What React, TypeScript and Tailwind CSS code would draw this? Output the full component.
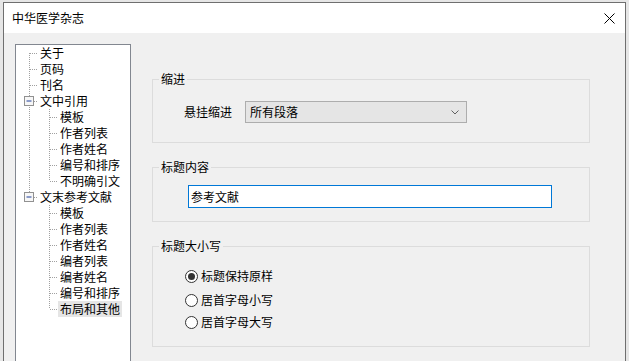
import React from 'react';

type Node = { label: string; children?: string[] };

const tree: Node[] = [
  { label: '关于' },
  { label: '页码' },
  { label: '刊名' },
  { label: '文中引用', children: ['模板', '作者列表', '作者姓名', '编号和排序', '不明确引文'] },
  {
    label: '文末参考文献',
    children: ['模板', '作者列表', '作者姓名', '编者列表', '编者姓名', '编号和排序', '布局和其他'],
  },
];

const dot = { stroke: '#a0a0a0', strokeWidth: 1, strokeDasharray: '1 1' };

function RootGutter({ first, last, open }: { first: boolean; last: boolean; open: boolean }) {
  return (
    <svg width="22" height="16" className="shrink-0">
      <line x1="13.5" y1={first ? 8 : 0} x2="13.5" y2={last ? 8 : 16} {...dot} />
      <line x1="14" y1="8.5" x2="22" y2="8.5" {...dot} />
      {open && (
        <>
          <rect x="8.5" y="3.5" width="9" height="9" fill="#f7f7f7" stroke="#919191" />
          <line x1="10.5" y1="8" x2="15.5" y2="8" stroke="#1f3f9a" strokeWidth="1" />
        </>
      )}
    </svg>
  );
}

function ChildGutter({ parentLast, last }: { parentLast: boolean; last: boolean }) {
  return (
    <svg width="42" height="16" className="shrink-0">
      {!parentLast && <line x1="13.5" y1="0" x2="13.5" y2="16" {...dot} />}
      <line x1="33.5" y1="0" x2="33.5" y2={last ? 8 : 16} {...dot} />
      <line x1="34" y1="8.5" x2="42" y2="8.5" {...dot} />
    </svg>
  );
}

function TreeView() {
  return (
    <div className="mt-[11px] h-[400px] w-[116px] shrink-0 border border-[#828790] bg-white">
      {tree.map((n, i) => {
        const last = i === tree.length - 1;
        return (
          <div key={n.label}>
            <div className="flex h-4 items-center">
              <RootGutter first={i === 0} last={last} open={!!n.children} />
              <span className="px-[2px] leading-4">{n.label}</span>
            </div>
            {n.children?.map((c, j) => {
              const sel = last && j === n.children!.length - 1;
              return (
                <div key={c + j} className="flex h-4 items-center">
                  <ChildGutter parentLast={last} last={j === n.children!.length - 1} />
                  <span className={`px-[2px] leading-4 ${sel ? 'bg-[#e5e5e5]' : ''}`}>{c}</span>
                </div>
              );
            })}
          </div>
        );
      })}
    </div>
  );
}

function Group({ title, className, children }: { title: string; className?: string; children: React.ReactNode }) {
  return (
    <fieldset className={`w-[438px] border border-[#dcdcdc] ${className ?? ''}`}>
      <legend className="ml-[6px] px-[2px] leading-4">{title}</legend>
      {children}
    </fieldset>
  );
}

function Radio({ checked, label, className }: { checked?: boolean; label: string; className?: string }) {
  return (
    <div className={`flex h-4 items-center pl-[32px] ${className ?? ''}`}>
      <span className="flex h-[13px] w-[13px] items-center justify-center rounded-full border border-[#333333] bg-white">
        {checked && <span className="h-[7px] w-[7px] rounded-full bg-[#333333]" />}
      </span>
      <span className="ml-[3px] leading-4">{label}</span>
    </div>
  );
}

export default function App() {
  return (
    <div
      className="h-[361px] w-[629px] overflow-hidden bg-[#e6e6e6] pl-[3px] pt-[2px] text-[12px] text-black"
      style={{ fontFamily: '"Noto Sans CJK SC", "Noto Sans", sans-serif' }}
    >
      <div className="flex h-[400px] w-[623px] flex-col border border-[#6f6f6f] bg-[#f0f0f0]">
        <div className="flex h-[30px] shrink-0 items-center justify-between bg-white pl-[8px] pr-[10px]">
          <span className="leading-4">中华医学杂志</span>
          <svg width="11" height="11" viewBox="0 0 11 11">
            <path d="M0.5 0.5 L10.5 10.5 M10.5 0.5 L0.5 10.5" stroke="#000" strokeWidth="1" />
          </svg>
        </div>

        <div className="flex items-start pl-[11px]">
          <TreeView />

          <div className="ml-[21px] pt-[38px]">
            <Group title="缩进">
              <div className="mt-[14px] flex items-center pb-[19px] pl-[31px]">
                <span className="w-[48px] leading-4">悬挂缩进</span>
                <div className="ml-[13px] flex h-[22px] w-[222px] items-center justify-between border border-[#adadad] bg-[#e5e5e5] pl-[4px] pr-[7px]">
                  <span className="leading-4">所有段落</span>
                  <svg width="8" height="5" viewBox="0 0 8 5">
                    <path d="M0.5 0.5 L4 4 L7.5 0.5" fill="none" stroke="#606060" strokeWidth="1" />
                  </svg>
                </div>
              </div>
            </Group>

            <Group title="标题内容" className="mt-[16px]">
              <div className="mt-[10px] pb-[13px] pl-[35px]">
                <div className="flex h-[23px] w-[364px] items-center border border-[#0078d7] bg-white pl-[2px]">
                  <span className="leading-4">参考文献</span>
                </div>
              </div>
            </Group>

            <Group title="标题大小写" className="mt-[16px]">
              <div className="pb-[16px]">
                <Radio checked label="标题保持原样" className="mt-[14px]" />
                <Radio label="居首字母小写" className="mt-[8px]" />
                <Radio label="居首字母大写" className="mt-[6px]" />
              </div>
            </Group>
          </div>
        </div>
      </div>
    </div>
  );
}
